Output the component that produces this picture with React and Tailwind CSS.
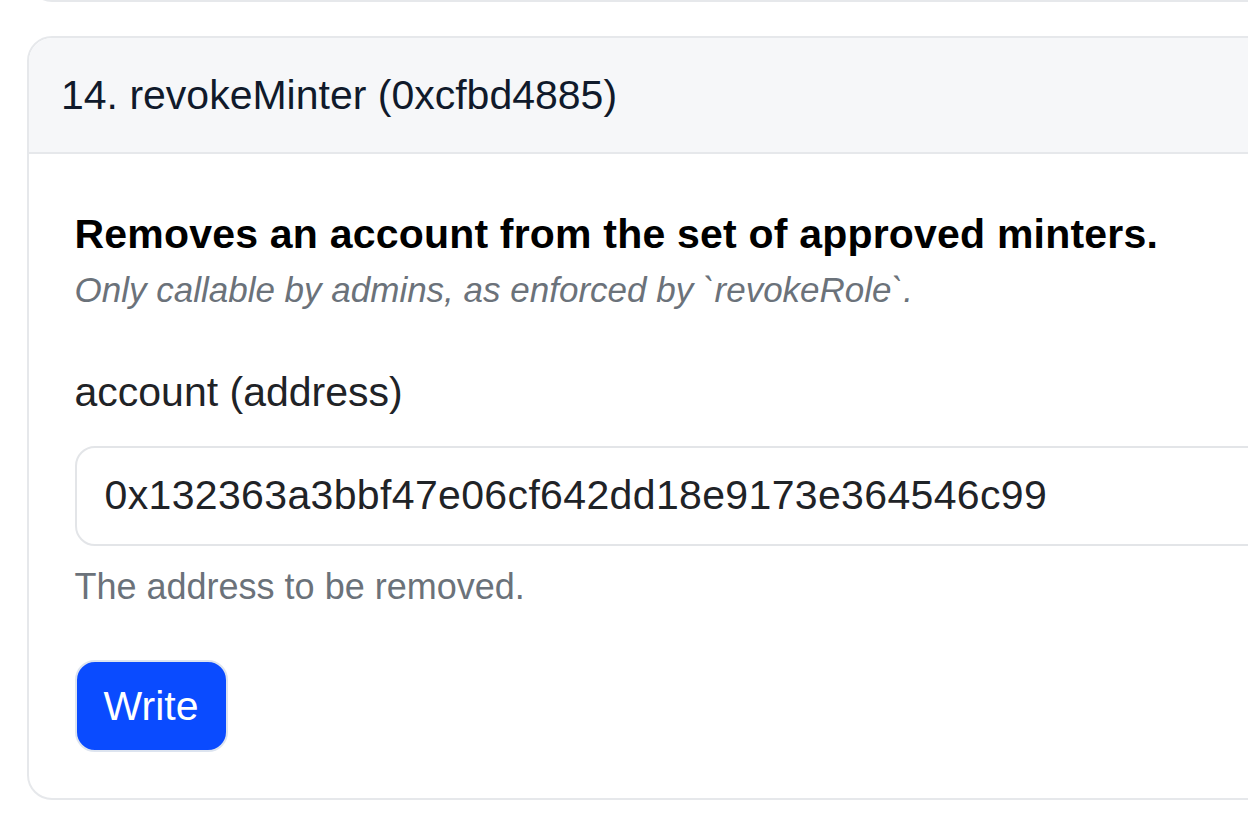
export default function App() {
  const font = { fontFamily: '"Liberation Sans", Arial, Helvetica, sans-serif' };
  return (
    <div className="w-[1248px] h-[830px] overflow-hidden bg-white flex flex-col" style={font}>
      {/* previous card bottom */}
      <div className="ml-[27px] w-[1300px] h-[40px] -mt-[38px] shrink-0 border-[2.5px] border-t-0 border-[#e6e8eb] rounded-b-[25px]" />
      {/* card */}
      <div className="ml-[27px] mt-[34px] w-[1300px] shrink-0 border-[2.5px] border-[#e6e8eb] rounded-[25px] overflow-hidden">
        <div className="bg-[#f6f7f9] border-b-[2.5px] border-[#e6e8eb] pl-[32px] py-[33px] text-[41px] leading-[48px] text-[#101a2b]">
          14. revokeMinter (0xcfbd4885)
        </div>
        <div className="pl-[45.5px] pt-[56px] pb-[46px] flex flex-col">
          <div className="text-[41px] leading-[48px] font-bold text-black tracking-[0.2px]">
            Removes an account from the set of approved minters.
          </div>
          <div className="mt-[6px] text-[35px] leading-[52px] italic text-[#6b727a]">
            Only callable by admins, as enforced by `revokeRole`.
          </div>
          <div className="mt-[46px] text-[41px] leading-[60px] text-[#1f2327]">account (address)</div>
          <div className="mt-[24px] h-[100px] w-[1240px] border-[2.5px] border-[#e3e5e8] rounded-[20px] pl-[28px] flex items-center text-[41px] tracking-[0.35px] text-[#1f2327]">
            0x132363a3bbf47e06cf642dd18e9173e364546c99
          </div>
          <div className="mt-[15px] text-[36px] leading-[52px] text-[#6b727a]">The address to be removed.</div>
          <div className="mt-[47px]">
            <button className="w-[153px] h-[92px] rounded-[20px] border-[2.5px] border-[#dde4ef] bg-[#0a4bff] text-white text-[41px] leading-none flex items-center justify-center" style={font}>
              Write
            </button>
          </div>
        </div>
      </div>
    </div>
  );
}
